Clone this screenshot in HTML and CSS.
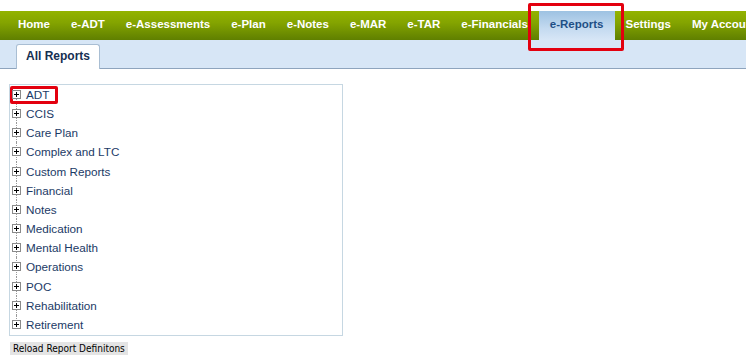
FILE: index.html
```html
<html lang="en">
<head>
	<meta http-equiv="Content-Type" content="text/html; charset=utf-8">
	<meta name="viewport" content="width=device-width, initial-scale=1.0">
	<title>e-Reports</title>
	<link rel="stylesheet" href="styles.css">
</head>
<body>

<div class="top-gap"></div>

<ul class="main-nav">
	<li>Home</li>
	<li>e-ADT</li>
	<li>e-Assessments</li>
	<li>e-Plan</li>
	<li>e-Notes</li>
	<li>e-MAR</li>
	<li>e-TAR</li>
	<li>e-Financials</li>
	<li class="active">e-Reports<span class="mark mark-nav"></span></li>
	<li>Settings</li>
	<li>My Account</li>
</ul>

<div class="sub-nav">
	<div class="sub-tab">All Reports</div>
</div>

<div class="content">
	<div class="tree">
		<ul class="tree-list">
			<li><span class="plus"></span>ADT<span class="mark mark-adt"></span></li>
			<li><span class="plus"></span>CCIS</li>
			<li><span class="plus"></span>Care Plan</li>
			<li><span class="plus"></span>Complex and LTC</li>
			<li><span class="plus"></span>Custom Reports</li>
			<li><span class="plus"></span>Financial</li>
			<li><span class="plus"></span>Notes</li>
			<li><span class="plus"></span>Medication</li>
			<li><span class="plus"></span>Mental Health</li>
			<li><span class="plus"></span>Operations</li>
			<li><span class="plus"></span>POC</li>
			<li><span class="plus"></span>Rehabilitation</li>
			<li class="last"><span class="plus"></span>Retirement</li>
		</ul>
	</div>
	<button class="reload">Reload Report Definitons</button>
</div>

</body>
</html>
```

FILE: styles.css
```css
body{
	margin: 0;
	padding: 0;
	font-family: "Liberation Sans", Arial, sans-serif;
	background: #fff;
	overflow: hidden;
}

.top-gap{
	height: 11px;
}

.main-nav{
	list-style: none;
	margin: 0;
	padding: 0 0 0 8px;
	height: 29px;
	display: flex;
	white-space: nowrap;
	background: linear-gradient(#93b300, #84a400 40%, #5f7f00);
}

.main-nav li{
	position: relative;
	flex-shrink: 0;
	padding: 0 10px 0 10px;
	margin-right: 1px;
	line-height: 27px;
	font-size: 11.5px;
	font-weight: bold;
	color: #fff;
}

.main-nav li.active{
	margin: 0 1px 0 0;
	padding: 0 11px;
	color: #1f4f86;
	background: linear-gradient(#9dc2e2, #c4daf0 60%, #d7e6f6);
	height: 29px;
}

.sub-nav{
	height: 28px;
	background: #d7e6f6;
	border-bottom: 1px solid #8ea4bd;
	padding-left: 16px;
	display: flex;
	align-items: flex-end;
}

.sub-tab{
	width: 82px;
	height: 24px;
	margin-bottom: -1px;
	background: #fff;
	border: 1px solid #a9bed3;
	border-bottom: none;
	border-radius: 3px 3px 0 0;
	text-align: center;
	font-size: 12px;
	font-weight: bold;
	line-height: 22px;
	color: #152f52;
}

.content{
	padding: 15px 0 0 9px;
}

.tree{
	width: 334px;
	height: 252px;
	border: 1px solid #c6d7e2;
	box-sizing: border-box;
}

.tree-list{
	list-style: none;
	margin: 0;
	padding: 0;
}

.tree-list li{
	position: relative;
	height: 19.17px;
	line-height: 19px;
	font-size: 11.7px;
	color: #1b3a66;
	padding-left: 16px;
}

.tree-list li::before{
	content: "";
	position: absolute;
	left: 6px;
	top: 0;
	bottom: 0;
	border-left: 1px dotted #999;
}

.tree-list li:first-child::before{
	top: 9px;
}

.tree-list li.last::before{
	bottom: 9px;
}

.plus{
	position: absolute;
	left: 2px;
	top: 5px;
	width: 7px;
	height: 7px;
	border: 1px solid #8a8a8a;
	background: #fff;
	z-index: 1;
}

.plus::before{
	content: "";
	position: absolute;
	left: 1px;
	top: 3px;
	width: 5px;
	height: 1px;
	background: #000;
}

.plus::after{
	content: "";
	position: absolute;
	left: 3px;
	top: 1px;
	width: 1px;
	height: 5px;
	background: #000;
}

.mark{
	position: absolute;
	border: 3px solid #e3000f;
	border-radius: 2px;
	box-sizing: border-box;
}

.mark-nav{
	left: -11px;
	top: -8px;
	width: 96px;
	height: 48px;
}

.mark-adt{
	left: 0;
	top: 1px;
	width: 48px;
	height: 18px;
}

.reload{
	display: block;
	margin: 6px 0 0 1px;
	padding: 0 3px;
	height: 13px;
	border: none;
	background: #e4e4e4;
	font-family: "DejaVu Sans Condensed", "DejaVu Sans", sans-serif;
	font-size: 10px;
	line-height: 13px;
	color: #000;
}
```
